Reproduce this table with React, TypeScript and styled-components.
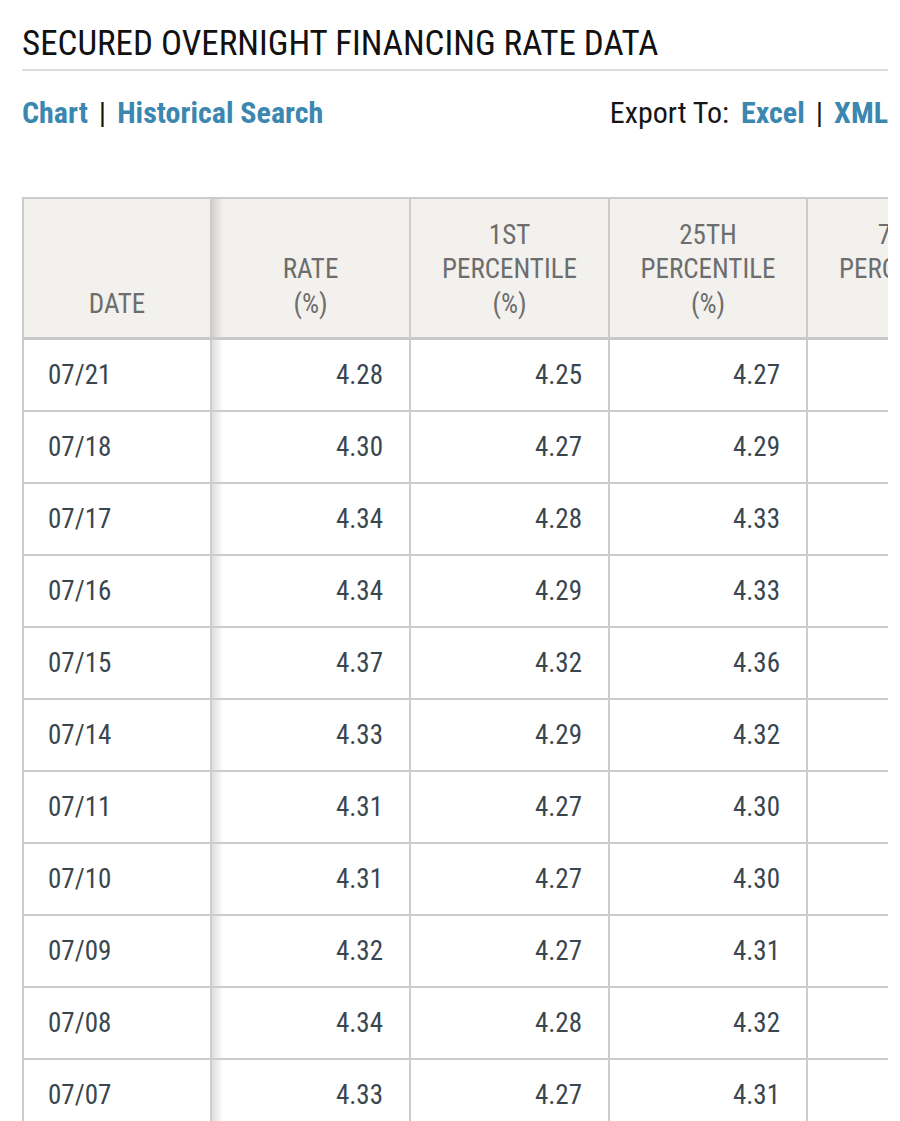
import React from "react";
import styled, { createGlobalStyle } from "styled-components";

const GlobalStyle = createGlobalStyle`
  html, body { margin: 0; padding: 0; background: #ffffff; }
  body { font-family: "Roboto Condensed", Roboto, "Liberation Sans", sans-serif; }
`;

const Page = styled.div`
  width: 866px;
  padding: 0 12px 0 22px;
`;

const Title = styled.h1`
  margin: 24px 0 0;
  padding-bottom: 5px;
  font-size: 35px;
  line-height: 40px;
  font-weight: 400;
  color: #111111;
  border-bottom: 2px solid #dcdcdc;
`;

const LinkBar = styled.div`
  display: flex;
  justify-content: space-between;
  align-items: center;
  margin-top: 24px;
  font-size: 30px;
  line-height: 36px;
`;

const LinkGroup = styled.div`
  display: flex;
  align-items: center;
  gap: 11px;
`;

const Label = styled.span`
  color: #151515;
  margin-right: 1px;
`;

const NavLink = styled.a`
  color: #3c87af;
  font-weight: 700;
  text-decoration: none;
`;

const Sep = styled.span`
  color: #151515;
  font-weight: 400;
`;

const TableWrap = styled.div`
  margin-top: 66px;
  width: 866px;
  overflow: hidden;
`;

const Table = styled.table`
  border-collapse: collapse;
  table-layout: fixed;
  width: 1386px;
  border-top: 2px solid #cccccc;
  border-left: 2px solid #cccccc;
`;

const HeadCell = styled.th<{ $shade?: boolean }>`
  height: 122px;
  padding: 0 20px 16px;
  vertical-align: bottom;
  text-align: center;
  font-size: 27px;
  line-height: 34.5px;
  font-weight: 400;
  color: #6d6d6d;
  background: ${(p) =>
    p.$shade
      ? "linear-gradient(to right, rgba(0,0,0,0.13), rgba(0,0,0,0) 11px), #f3f1ed"
      : "#f3f1ed"};
  border-right: 2px solid #cccccc;
  border-bottom: 3px solid #c8c8c8;
`;

const Cell = styled.td<{ $align?: "left" | "right"; $shade?: boolean }>`
  height: 70px;
  padding: ${(p) => (p.$align === "left" ? "0 26px 0 24px" : "0 26px")};
  text-align: ${(p) => p.$align || "right"};
  vertical-align: middle;
  font-size: 27px;
  color: #3a464f;
  background: ${(p) =>
    p.$shade
      ? "linear-gradient(to right, rgba(0,0,0,0.13), rgba(0,0,0,0) 11px), #ffffff"
      : "#ffffff"};
  border-right: 2px solid #cccccc;
  border-bottom: 2px solid #cccccc;
`;

type Row = [string, string, string, string, string, string, string];

const rows: Row[] = [
  ["07/21", "4.28", "4.25", "4.27", "4.30", "4.37", "2,618"],
  ["07/18", "4.30", "4.27", "4.29", "4.31", "4.40", "2,640"],
  ["07/17", "4.34", "4.28", "4.33", "4.35", "4.45", "2,651"],
  ["07/16", "4.34", "4.29", "4.33", "4.35", "4.44", "2,636"],
  ["07/15", "4.37", "4.32", "4.36", "4.38", "4.48", "2,674"],
  ["07/14", "4.33", "4.29", "4.32", "4.34", "4.42", "2,600"],
  ["07/11", "4.31", "4.27", "4.30", "4.32", "4.40", "2,580"],
  ["07/10", "4.31", "4.27", "4.30", "4.32", "4.40", "2,562"],
  ["07/09", "4.32", "4.27", "4.31", "4.33", "4.41", "2,571"],
  ["07/08", "4.34", "4.28", "4.32", "4.35", "4.44", "2,590"],
  ["07/07", "4.33", "4.27", "4.31", "4.34", "4.43", "2,577"],
];

const headers: React.ReactNode[] = [
  <>DATE</>,
  <>RATE<br />(%)</>,
  <>1ST<br />PERCENTILE<br />(%)</>,
  <>25TH<br />PERCENTILE<br />(%)</>,
  <>75TH<br />PERCENTILE<br />(%)</>,
  <>99TH<br />PERCENTILE<br />(%)</>,
  <>VOLUME<br />($BILLIONS)</>,
];

const widths = [188, 199, 199, 198, 199, 199, 204];

export default function App() {
  return (
    <>
      <GlobalStyle />
      <Page>
        <Title>SECURED OVERNIGHT FINANCING RATE DATA</Title>
        <LinkBar>
          <LinkGroup>
            <NavLink href="#">Chart</NavLink>
            <Sep>|</Sep>
            <NavLink href="#">Historical Search</NavLink>
          </LinkGroup>
          <LinkGroup>
            <Label>Export To:</Label>
            <NavLink href="#">Excel</NavLink>
            <Sep>|</Sep>
            <NavLink href="#">XML</NavLink>
          </LinkGroup>
        </LinkBar>
        <TableWrap>
          <Table>
            <colgroup>
              {widths.map((w, i) => (
                <col key={i} style={{ width: w }} />
              ))}
            </colgroup>
            <thead>
              <tr>
                {headers.map((h, i) => (
                  <HeadCell key={i} $shade={i === 1}>
                    {h}
                  </HeadCell>
                ))}
              </tr>
            </thead>
            <tbody>
              {rows.map((r) => (
                <tr key={r[0]}>
                  {r.map((v, i) => (
                    <Cell key={i} $align={i === 0 ? "left" : "right"} $shade={i === 1}>
                      {v}
                    </Cell>
                  ))}
                </tr>
              ))}
            </tbody>
          </Table>
        </TableWrap>
      </Page>
    </>
  );
}
